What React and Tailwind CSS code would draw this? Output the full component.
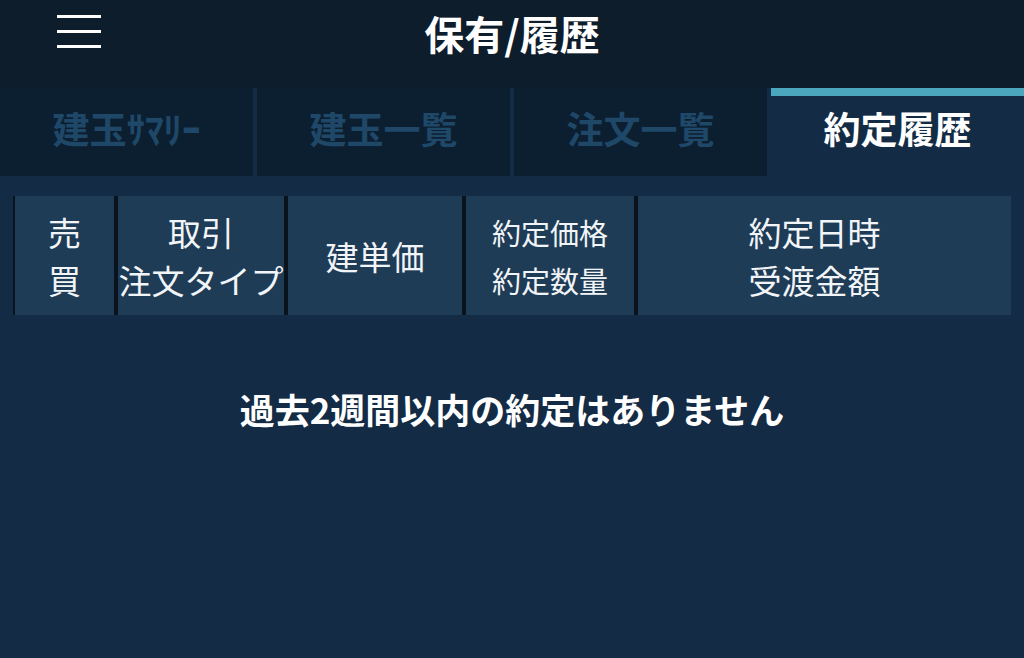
import React, { useState } from 'react'

const tabs = [
    { key: 'summary', label: '建玉ｻﾏﾘｰ' },
    { key: 'positions', label: '建玉一覧' },
    { key: 'orders', label: '注文一覧' },
    { key: 'executions', label: '約定履歴' },
]

const columns = [
    { lines: ['売', '買'], width: 'w-[99px]' },
    { lines: ['取引', '注文タイプ'], width: 'w-[166px]' },
    { lines: ['建単価'], width: 'w-[174px]' },
    { lines: ['約定価格', '約定数量'], width: 'w-[168px]', small: true },
    { lines: ['約定日時', '受渡金額'], width: 'flex-1 pr-[20px]' },
]

const App = () => {
    const [active, setActive] = useState('executions')

    return (
        <div className="w-[1024px] h-[658px] overflow-hidden bg-[#132b44] text-white font-['Noto_Sans_CJK_JP','Noto_Sans',sans-serif]">
            {/* header */}
            <div className="relative h-[88px] bg-[#0e1d2b] flex items-center justify-center">
                <button className="absolute left-[57px] top-[15px] w-[44px] flex flex-col gap-[12px]">
                    <span className="block h-[3px] bg-white" />
                    <span className="block h-[3px] bg-white" />
                    <span className="block h-[3px] bg-white" />
                </button>
                <h1 className="text-[40px] font-bold leading-none -mt-[22px]">保有/履歴</h1>
            </div>

            {/* tabs */}
            <div className="flex gap-[4px] h-[88px]">
                {tabs.map(tab => {
                    const isActive = tab.key === active
                    return (
                        <button
                            key={tab.key}
                            onClick={() => setActive(tab.key)}
                            className={isActive
                                ? 'flex-1 flex items-center justify-center bg-[#132b44] border-t-[8px] border-[#4ba7be] text-white text-[37px] font-bold pb-[14px]'
                                : 'flex-1 flex items-center justify-center bg-[#0c1f31] text-[#1f4868] text-[37px] font-bold pb-[6px]'}
                        >
                            {tab.label}
                        </button>
                    )
                })}
            </div>

            {/* table header */}
            <div className="mt-[20px] mx-[13px] flex gap-[4px] bg-[#08131e] pl-[2px] h-[119px]">
                {columns.map((col, i) => (
                    <div
                        key={i}
                        className={`${col.width} bg-[#1f3c57] flex flex-col items-center justify-center text-[#f2f5f8] ${col.small ? 'text-[29px] leading-[48px]' : 'text-[33px] leading-[48px]'}`}
                    >
                        {col.lines.map(line => (
                            <span key={line} className="whitespace-nowrap">{line}</span>
                        ))}
                    </div>
                ))}
            </div>

            <p className="mt-[70px] text-center text-[35px] font-bold leading-[48px]">過去2週間以内の約定はありません</p>
        </div>
    )
}

export default App
